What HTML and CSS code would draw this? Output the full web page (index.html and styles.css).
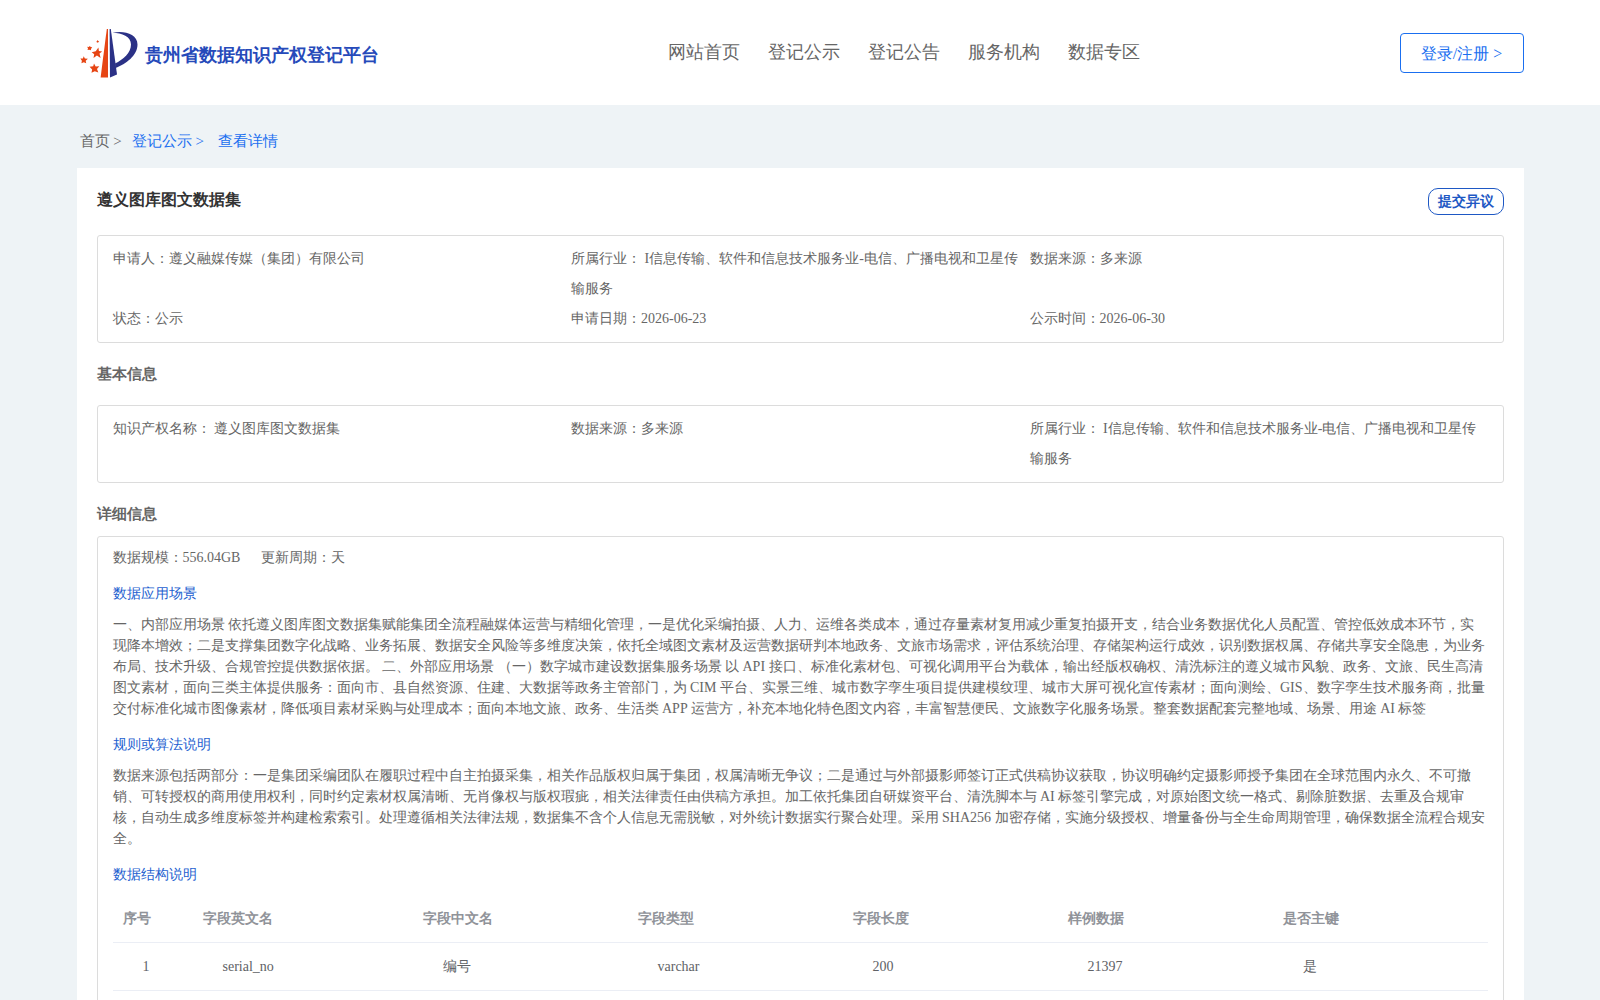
FILE: index.html
```html
<!DOCTYPE html>
<html>
<head>
    <meta charset="utf-8">
    <title>贵州省数据知识产权登记平台</title>
    <link rel="stylesheet" href="styles.css">
</head>
<body>
    <div class="header">
        <div class="logo">
            <svg class="logo-icon" width="58" height="50" viewBox="0 0 58 50">
                <path fill="#e64514" d="M26.8 1L28 1L28 49.5L20.6 49.5Z"/>
                <path fill="#2b3186" d="M29.6 1L30.8 1L37 46.5L30 49.5Z"/>
                <path fill="#2b3186" d="M32.5 4.800C43 2 57.500 5.500 57.500 16.500C57.500 27.500 46 36 35.500 40L35 35.500C43 31.500 51 25 51 16.500C51 8.500 42 5 32.500 4.800Z"/>
                <g fill="#e64514">
                    <path d="M18.400 19.600L18.900 23L22.200 23.400L19.500 25.500L20.600 30L16.900 27.600L13.500 30L14.200 26.200L11.700 24.300L15.700 23.300Z"/>
                    <path d="M14 35.400L15.700 38.400L19.300 38.300L17 41L18.300 44.500L14.800 43.200L11.500 44.800L12.100 41.400L9.600 38.800L13.200 38.300Z"/>
                    <path d="M3.700 28.300L4.900 30.500L7.900 30.800L5.700 32.800L6.200 35.300L3.800 34.200L1.400 35.200L1.900 32.700L.400 30.600L2.900 30.400Z"/>
                    <path d="M9.800 17.900L10.700 19.100L12.200 19.200L11.100 20.700L10.800 22.300L9.200 21.800L7.500 22.100L8 20.500L7.200 18.800L8.800 18.900Z"/>
                    <path d="M17.600 12L18.300 13L19.200 13.200L18.400 14.100L18 15L17.200 14.300L16 14L17 13.200Z"/>
                </g>
            </svg>
            <span class="logo-text">贵州省数据知识产权登记平台</span>
        </div>
        <div class="nav">
            <a>网站首页</a>
            <a>登记公示</a>
            <a>登记公告</a>
            <a>服务机构</a>
            <a>数据专区</a>
        </div>
        <div class="login">登录/注册 &gt;</div>
    </div>

    <div class="container">
        <div class="breadcrumb">
            <span>首页 &gt;</span>
            <a class="crumb-list">登记公示 &gt;</a>
            <a class="crumb-detail">查看详情</a>
        </div>

        <div class="card">
            <div class="card-header">
                <h1>遵义图库图文数据集</h1>
                <div class="objection">提交异议</div>
            </div>

            <div class="box info">
                <div>申请人：遵义融媒传媒（集团）有限公司</div>
                <div>所属行业： I信息传输、软件和信息技术服务业-电信、广播电视和卫星传输服务</div>
                <div>数据来源：多来源</div>
                <div>状态：公示</div>
                <div>申请日期：2026-06-23</div>
                <div>公示时间：2026-06-30</div>
            </div>

            <h2 class="title-basic">基本信息</h2>
            <div class="box info">
                <div>知识产权名称： 遵义图库图文数据集</div>
                <div>数据来源：多来源</div>
                <div>所属行业： I信息传输、软件和信息技术服务业-电信、广播电视和卫星传输服务</div>
            </div>

            <h2 class="title-detail">详细信息</h2>
            <div class="box detail">
                <div class="scale">
                    <span>数据规模：556.04GB</span>
                    <span>更新周期：天</span>
                </div>

                <h3>数据应用场景</h3>
                <p>一、内部应用场景 依托遵义图库图文数据集赋能集团全流程融媒体运营与精细化管理，一是优化采编拍摄、人力、运维各类成本，通过存量素材复用减少重复拍摄开支，结合业务数据优化人员配置、管控低效成本环节，实现降本增效；二是支撑集团数字化战略、业务拓展、数据安全风险等多维度决策，依托全域图文素材及运营数据研判本地政务、文旅市场需求，评估系统治理、存储架构运行成效，识别数据权属、存储共享安全隐患，为业务布局、技术升级、合规管控提供数据依据。 二、外部应用场景 （一）数字城市建设数据集服务场景 以 API 接口、标准化素材包、可视化调用平台为载体，输出经版权确权、清洗标注的遵义城市风貌、政务、文旅、民生高清图文素材，面向三类主体提供服务：面向市、县自然资源、住建、大数据等政务主管部门，为 CIM 平台、实景三维、城市数字孪生项目提供建模纹理、城市大屏可视化宣传素材；面向测绘、GIS、数字孪生技术服务商，批量交付标准化城市图像素材，降低项目素材采购与处理成本；面向本地文旅、政务、生活类 APP 运营方，补充本地化特色图文内容，丰富智慧便民、文旅数字化服务场景。整套数据配套完整地域、场景、用途 AI 标签</p>

                <h3>规则或算法说明</h3>
                <p>数据来源包括两部分：一是集团采编团队在履职过程中自主拍摄采集，相关作品版权归属于集团，权属清晰无争议；二是通过与外部摄影师签订正式供稿协议获取，协议明确约定摄影师授予集团在全球范围内永久、不可撤销、可转授权的商用使用权利，同时约定素材权属清晰、无肖像权与版权瑕疵，相关法律责任由供稿方承担。加工依托集团自研媒资平台、清洗脚本与 AI 标签引擎完成，对原始图文统一格式、剔除脏数据、去重及合规审核，自动生成多维度标签并构建检索索引。处理遵循相关法律法规，数据集不含个人信息无需脱敏，对外统计数据实行聚合处理。采用 SHA256 加密存储，实施分级授权、增量备份与全生命周期管理，确保数据全流程合规安全。</p>

                <h3>数据结构说明</h3>
                <table>
                    <colgroup>
                        <col class="col-index">
                        <col class="col-name">
                        <col span="5">
                    </colgroup>
                    <tr>
                        <th>序号</th>
                        <th>字段英文名</th>
                        <th>字段中文名</th>
                        <th>字段类型</th>
                        <th>字段长度</th>
                        <th>样例数据</th>
                        <th>是否主键</th>
                    </tr>
                    <tr>
                        <td>1</td>
                        <td>serial_no</td>
                        <td>编号</td>
                        <td>varchar</td>
                        <td>200</td>
                        <td>21397</td>
                        <td>是</td>
                    </tr>
                </table>
            </div>
        </div>
    </div>
</body>
</html>
```
FILE: styles.css
```css
* {
    box-sizing: border-box;
}

body {
    margin: 0;
    height: 1000px;
    overflow: hidden;
    background-color: #eef3f6;
    font-family: "Liberation Serif", serif;
    font-size: 14px;
    color: #666;
}

h1, h2, h3, p {
    margin: 0;
}

.header {
    display: grid;
    grid-template-columns: 588px 1fr auto;
    height: 105px;
    padding: 0 76.5px 0 80px;
    background-color: #fff;
}

.logo {
    display: flex;
    align-items: flex-start;
    padding-top: 28px;
}

.logo-text {
    margin: 16px 0 0 6.5px;
    font-size: 18px;
    line-height: 22px;
    font-weight: bold;
    color: #264aba;
}

.nav {
    display: flex;
    gap: 28px;
    padding-top: 41px;
    font-size: 18px;
    line-height: 22px;
}

.login {
    width: 124px;
    height: 40px;
    margin-top: 33px;
    border: 1px solid #1a6ff0;
    border-radius: 4px;
    font-size: 16px;
    line-height: 40px;
    text-align: center;
    color: #1a6ff0;
}

.container {
    width: 1447px;
    margin: 0 auto;
}

.breadcrumb {
    height: 63px;
    padding: 26px 0 0 3px;
    font-size: 15px;
    line-height: 20px;
    display: flex;
}

.breadcrumb a {
    color: #1a6ff0;
}

.crumb-list {
    margin-left: 10px;
}

.crumb-detail {
    margin-left: 14px;
}

.card {
    height: 832px;
    padding: 20px 20px 0;
    background-color: #fff;
    overflow: hidden;
}

.card-header {
    display: flex;
    justify-content: space-between;
    height: 47px;
}

h1 {
    font-size: 16px;
    line-height: 24px;
    color: #333;
}

.objection {
    width: 76px;
    height: 27px;
    border: 1px solid #1e58c4;
    border-radius: 10px;
    line-height: 25px;
    text-align: center;
    font-weight: bold;
    color: #1e58c4;
}

.box {
    padding: 8px 15px;
    border: 1px solid #dcdcdc;
    border-radius: 3px;
}

.info {
    display: grid;
    grid-template-columns: 458.5px 458.6px 1fr;
    line-height: 30px;
}

h2 {
    font-size: 15px;
    line-height: 22px;
}

.title-basic {
    padding: 20px 0;
}

.title-detail {
    padding: 20px 0 11px;
}

.detail {
    height: 600px;
    padding-top: 10px;
    line-height: 21px;
}

.scale {
    display: flex;
    gap: 21px;
}

h3 {
    margin: 15px 0 10px;
    font-size: 14px;
    font-weight: normal;
    color: #1e5fd0;
}

table {
    width: 100%;
    table-layout: fixed;
    border-collapse: separate;
    border-spacing: 0;
    text-align: left;
}

.col-index {
    width: 80px;
}

.col-name {
    width: 220px;
}

th, td {
    height: 48px;
    padding: 0 10px;
    border-bottom: 1px solid #ebeef5;
}

th {
    color: #909399;
}

td {
    padding-left: 30px;
    color: #606266;
}
```
